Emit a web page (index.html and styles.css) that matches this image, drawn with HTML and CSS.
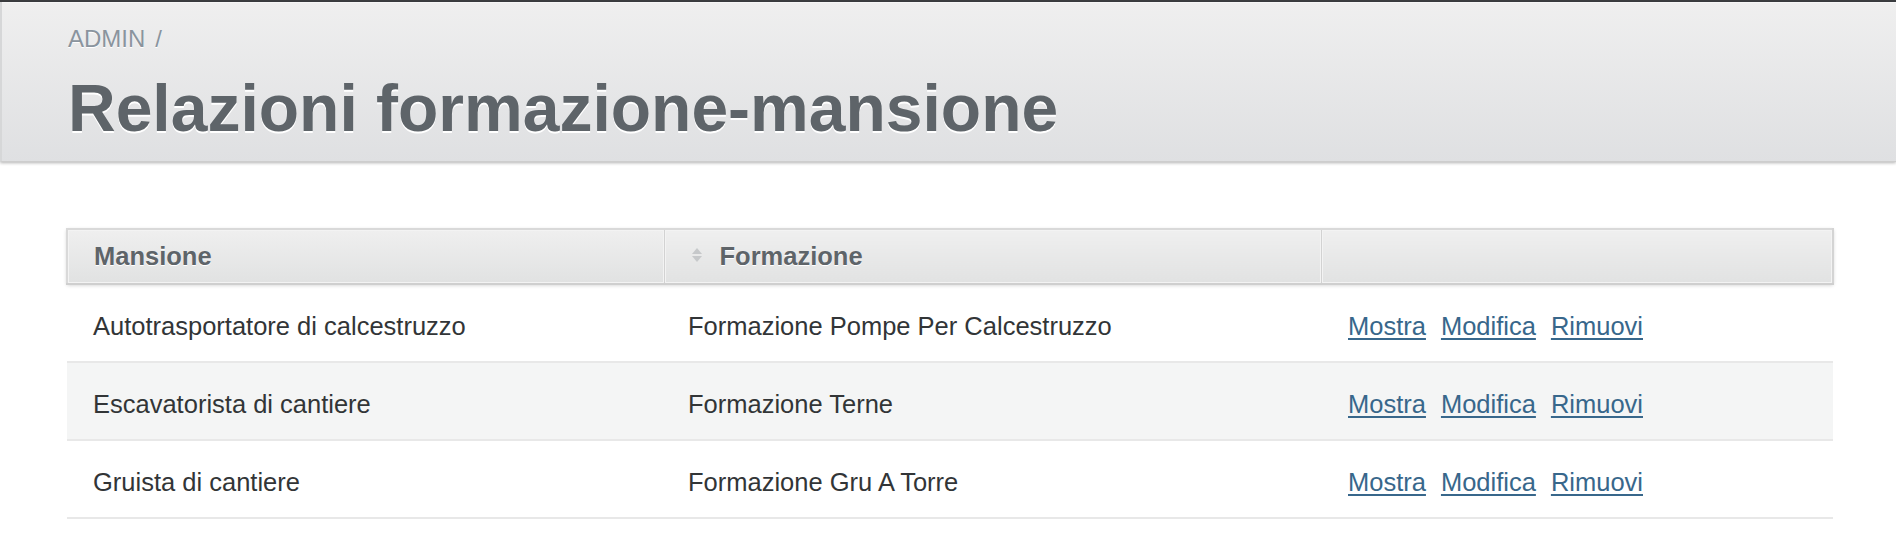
FILE: index.html
```html
<!DOCTYPE html>
<html lang="it">
<head>
<meta charset="utf-8">
<title>Relazioni formazione-mansione</title>
<link rel="stylesheet" href="styles.css">
</head>
<body>
<div class="topline"></div>
<div class="title-bar">
  <div class="breadcrumbs"><span class="crumb">ADMIN</span><span class="sep">/</span></div>
  <h2 class="page-title">Relazioni formazione-mansione</h2>
</div>
<div class="main">
  <table class="index-table">
    <thead>
      <tr>
        <th class="col-mansione">Mansione</th>
        <th class="col-formazione sortable"><span class="sort-icon"><span class="tri-up"></span><span class="tri-down"></span></span>Formazione</th>
        <th class="col-actions"></th>
      </tr>
    </thead>
    <tbody>
      <tr class="odd">
        <td>Autotrasportatore di calcestruzzo</td>
        <td>Formazione Pompe Per Calcestruzzo</td>
        <td class="actions"><a href="#">Mostra</a><a href="#">Modifica</a><a href="#">Rimuovi</a></td>
      </tr>
      <tr class="even">
        <td>Escavatorista di cantiere</td>
        <td>Formazione Terne</td>
        <td class="actions"><a href="#">Mostra</a><a href="#">Modifica</a><a href="#">Rimuovi</a></td>
      </tr>
      <tr class="odd">
        <td>Gruista di cantiere</td>
        <td>Formazione Gru A Torre</td>
        <td class="actions"><a href="#">Mostra</a><a href="#">Modifica</a><a href="#">Rimuovi</a></td>
      </tr>
    </tbody>
  </table>
</div>
</body>
</html>
```

FILE: styles.css
```css
html, body {
  margin: 0;
  padding: 0;
  background: #ffffff;
  font-family: "Liberation Sans", Arial, sans-serif;
  color: #323537;
}

.topline {
  height: 2px;
  background: #3c3e41;
}

.title-bar {
  background: linear-gradient(#efefef, #dfe0e2);
  border-left: 2px solid #d6d7d8;
  border-bottom: 1px solid #cdcdcd;
  box-shadow: 0 1px 3px rgba(0, 0, 0, 0.3), inset 0 1px 0 #f6f6f6;
  padding: 24px 0 21px 66px;
  height: 114px;
}

.breadcrumbs {
  font-size: 24px;
  line-height: 26px;
  color: #8a949e;
  text-shadow: 0 1px 0 #ffffff;
}

.breadcrumbs .sep {
  margin-left: 10px;
}

.page-title {
  margin: 23px 0 0 0;
  font-size: 66px;
  line-height: 66px;
  font-weight: bold;
  color: #5e6469;
  text-shadow: 0 2px 0 #ffffff;
  letter-spacing: 0;
}

.main {
  padding: 66px 62px 0 66px;
}

.index-table {
  width: 100%;
  border-collapse: collapse;
  border-spacing: 0;
  font-size: 25.5px;
}

.index-table thead tr {
  box-shadow: 0 1px 4px rgba(0, 0, 0, 0.22);
}

.index-table th {
  height: 53px;
  padding: 0 26px 0 26px;
  text-align: left;
  font-weight: bold;
  color: #5e6469;
  text-shadow: 0 1px 0 #ffffff;
  background: linear-gradient(#efefef, #e1e2e2);
  border-top: 2px solid #d9d9d9;
  border-bottom: 2px solid #cfcfcf;
  box-shadow: inset 0 0 0 1px #f3f3f3;
  vertical-align: middle;
}

.index-table th:first-child {
  border-left: 2px solid #d9d9d9;
}

.index-table th:last-child {
  border-right: 2px solid #d4d4d4;
}

.index-table th + th {
  border-left: 1px solid #d2d2d2;
}

.col-mansione { width: 597px; box-sizing: border-box; }
.col-formazione { width: 657px; box-sizing: border-box; }

.index-table th.sortable {
  padding-left: 27px;
}

.sort-icon {
  display: inline-flex;
  flex-direction: column;
  gap: 2px;
  vertical-align: middle;
  margin-right: 18px;
  position: relative;
  top: -3px;
}

.tri-up {
  width: 0;
  height: 0;
  border-left: 5px solid transparent;
  border-right: 5px solid transparent;
  border-bottom: 6px solid #c6c8ca;
}

.tri-down {
  width: 0;
  height: 0;
  border-left: 5px solid transparent;
  border-right: 5px solid transparent;
  border-top: 6px solid #c6c8ca;
}

.index-table td {
  height: 70px;
  padding: 6px 26px 0 26px;
  border-bottom: 2px solid #e8e8e8;
  vertical-align: middle;
  color: #323537;
}

.index-table td + td {
  padding-left: 24px;
}

.index-table tr.even td {
  background: #f4f5f5;
}

.index-table td.actions {
  padding-left: 27px;
}

.actions a {
  color: #38678b;
  text-decoration: underline;
  text-decoration-thickness: 2px;
  text-underline-offset: 3px;
  margin-right: 15px;
}
```
